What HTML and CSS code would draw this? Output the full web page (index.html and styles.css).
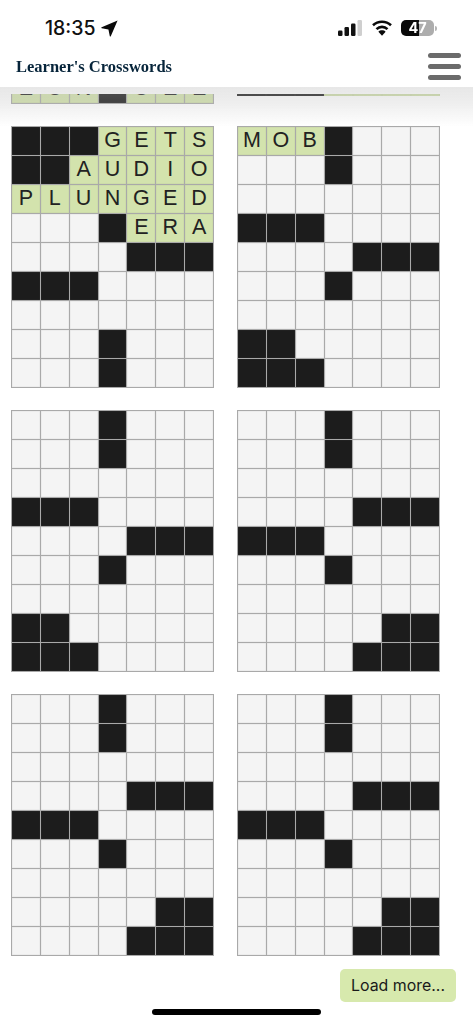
FILE: index.html
```html
<!DOCTYPE html>
<html lang="en">
<head>
<meta charset="utf-8">
<title>Learner's Crosswords</title>
<link rel="stylesheet" href="styles.css">
</head>
<body>
<header class="top">
  <div class="status">
    <div class="clock"><span>18:35</span>
      <svg class="arrow" viewBox="0 0 16 16"><path d="M15.6.5 9.2 15.300c-.2.5-.8.4-.9-.1L7 9 .7 7.700C.2 7.600.1 7 .6 6.800Z"/></svg>
    </div>
    <div class="sys">
      <svg class="signal" viewBox="0 0 24 16"><rect x="0" y="10.500" width="4.500" height="5.500" rx="1.200"/><rect x="6.500" y="7" width="4.500" height="9" rx="1.200"/><rect x="13" y="3.500" width="4.500" height="12.500" rx="1.200"/><rect class="off" x="19.500" y="0" width="4.500" height="16" rx="1.200"/></svg>
      <svg class="wifi" viewBox="0 0 22 16"><path class="arc" d="M2 5.300C7 .6 15 .6 20 5.300"/><path class="arc" d="M5.500 9.100c3.100-3 7.900-3 11 0"/><path d="M11 10.300c-1.400 0-2.700.5-3.600 1.400L11 15.700l3.600-4c-.9-.9-2.200-1.400-3.600-1.400Z"/></svg>
      <div class="battery"><span class="level">47</span></div>
      <span class="tip"></span>
    </div>
  </div>
  <nav class="bar">
    <span class="brand">Learner's Crosswords</span>
    <div class="burger"><span></span><span></span><span></span></div>
  </nav>
</header>

<main class="page">
  <div class="boards">
    <div class="board strip">
      <i class="g">E</i><i class="g">O</i><i class="g">N</i><i class="k"></i><i class="g">O</i><i class="g">E</i><i class="g">E</i>
    </div>
    <div class="board strip thin">
      <i class="k"></i><i class="k"></i><i class="k"></i><i class="g"></i><i class="g"></i><i class="g"></i><i class="g"></i>
    </div>

    <div class="board">
      <i class="k"></i><i class="k"></i><i class="k"></i><i class="g">G</i><i class="g">E</i><i class="g">T</i><i class="g">S</i>
      <i class="k"></i><i class="k"></i><i class="g">A</i><i class="g">U</i><i class="g">D</i><i class="g">I</i><i class="g">O</i>
      <i class="g">P</i><i class="g">L</i><i class="g">U</i><i class="g">N</i><i class="g">G</i><i class="g">E</i><i class="g">D</i>
      <i></i><i></i><i></i><i class="k"></i><i class="g">E</i><i class="g">R</i><i class="g">A</i>
      <i></i><i></i><i></i><i></i><i class="k"></i><i class="k"></i><i class="k"></i>
      <i class="k"></i><i class="k"></i><i class="k"></i><i></i><i></i><i></i><i></i>
      <i></i><i></i><i></i><i></i><i></i><i></i><i></i>
      <i></i><i></i><i></i><i class="k"></i><i></i><i></i><i></i>
      <i></i><i></i><i></i><i class="k"></i><i></i><i></i><i></i>
    </div>
    <div class="board">
      <i class="g">M</i><i class="g">O</i><i class="g">B</i><i class="k"></i><i></i><i></i><i></i>
      <i></i><i></i><i></i><i class="k"></i><i></i><i></i><i></i>
      <i></i><i></i><i></i><i></i><i></i><i></i><i></i>
      <i class="k"></i><i class="k"></i><i class="k"></i><i></i><i></i><i></i><i></i>
      <i></i><i></i><i></i><i></i><i class="k"></i><i class="k"></i><i class="k"></i>
      <i></i><i></i><i></i><i class="k"></i><i></i><i></i><i></i>
      <i></i><i></i><i></i><i></i><i></i><i></i><i></i>
      <i class="k"></i><i class="k"></i><i></i><i></i><i></i><i></i><i></i>
      <i class="k"></i><i class="k"></i><i class="k"></i><i></i><i></i><i></i><i></i>
    </div>

    <div class="board">
      <i></i><i></i><i></i><i class="k"></i><i></i><i></i><i></i>
      <i></i><i></i><i></i><i class="k"></i><i></i><i></i><i></i>
      <i></i><i></i><i></i><i></i><i></i><i></i><i></i>
      <i class="k"></i><i class="k"></i><i class="k"></i><i></i><i></i><i></i><i></i>
      <i></i><i></i><i></i><i></i><i class="k"></i><i class="k"></i><i class="k"></i>
      <i></i><i></i><i></i><i class="k"></i><i></i><i></i><i></i>
      <i></i><i></i><i></i><i></i><i></i><i></i><i></i>
      <i class="k"></i><i class="k"></i><i></i><i></i><i></i><i></i><i></i>
      <i class="k"></i><i class="k"></i><i class="k"></i><i></i><i></i><i></i><i></i>
    </div>
    <div class="board">
      <i></i><i></i><i></i><i class="k"></i><i></i><i></i><i></i>
      <i></i><i></i><i></i><i class="k"></i><i></i><i></i><i></i>
      <i></i><i></i><i></i><i></i><i></i><i></i><i></i>
      <i></i><i></i><i></i><i></i><i class="k"></i><i class="k"></i><i class="k"></i>
      <i class="k"></i><i class="k"></i><i class="k"></i><i></i><i></i><i></i><i></i>
      <i></i><i></i><i></i><i class="k"></i><i></i><i></i><i></i>
      <i></i><i></i><i></i><i></i><i></i><i></i><i></i>
      <i></i><i></i><i></i><i></i><i></i><i class="k"></i><i class="k"></i>
      <i></i><i></i><i></i><i></i><i class="k"></i><i class="k"></i><i class="k"></i>
    </div>

    <div class="board">
      <i></i><i></i><i></i><i class="k"></i><i></i><i></i><i></i>
      <i></i><i></i><i></i><i class="k"></i><i></i><i></i><i></i>
      <i></i><i></i><i></i><i></i><i></i><i></i><i></i>
      <i></i><i></i><i></i><i></i><i class="k"></i><i class="k"></i><i class="k"></i>
      <i class="k"></i><i class="k"></i><i class="k"></i><i></i><i></i><i></i><i></i>
      <i></i><i></i><i></i><i class="k"></i><i></i><i></i><i></i>
      <i></i><i></i><i></i><i></i><i></i><i></i><i></i>
      <i></i><i></i><i></i><i></i><i></i><i class="k"></i><i class="k"></i>
      <i></i><i></i><i></i><i></i><i class="k"></i><i class="k"></i><i class="k"></i>
    </div>
    <div class="board">
      <i></i><i></i><i></i><i class="k"></i><i></i><i></i><i></i>
      <i></i><i></i><i></i><i class="k"></i><i></i><i></i><i></i>
      <i></i><i></i><i></i><i></i><i></i><i></i><i></i>
      <i></i><i></i><i></i><i></i><i class="k"></i><i class="k"></i><i class="k"></i>
      <i class="k"></i><i class="k"></i><i class="k"></i><i></i><i></i><i></i><i></i>
      <i></i><i></i><i></i><i class="k"></i><i></i><i></i><i></i>
      <i></i><i></i><i></i><i></i><i></i><i></i><i></i>
      <i></i><i></i><i></i><i></i><i></i><i class="k"></i><i class="k"></i>
      <i></i><i></i><i></i><i></i><i class="k"></i><i class="k"></i><i class="k"></i>
    </div>
  </div>
  <div class="more"><button class="load">Load more...</button></div>
</main>
<div class="home"></div>
</body>
</html>
```

FILE: styles.css
```css
* { box-sizing: border-box; }
html, body { margin: 0; padding: 0; height: 100%; overflow: hidden; background: #fff; }
body { font-family: "Liberation Sans", sans-serif; }

.top {
  position: fixed;
  top: 0; left: 0; right: 0;
  height: 87px;
  background: #fff;
  z-index: 2;
}
.top::after {
  content: "";
  position: absolute;
  top: 100%; left: 0; right: 0;
  height: 40px;
  background: linear-gradient(to bottom, rgba(185,185,185,.34), rgba(185,185,185,.24) 40%, rgba(185,185,185,0));
}

.status {
  height: 47px;
  padding: 10px 36px 0 45px;
  display: flex;
  justify-content: space-between;
  align-items: center;
}
.clock { display: flex; align-items: center; gap: 5px; font: 500 19.5px/1 Inter, sans-serif; color: #111; }
.arrow { width: 17px; height: 17px; fill: #0a0a0a; margin-top: -1px; }
.sys { display: flex; align-items: center; margin-top: -1px; }
.signal { width: 24px; height: 16px; fill: #111; margin-right: 9px; }
.signal .off { fill: #cfcfcf; }
.wifi { width: 22px; height: 16px; fill: #0a0a0a; margin-right: 8px; }
.wifi .arc { fill: none; stroke: #0a0a0a; stroke-width: 2.6px; }
.battery {
  width: 33px; height: 16px;
  border-radius: 5px;
  background: linear-gradient(to right, #0a0a0a 55%, #adadad 55%);
  display: flex; align-items: center; justify-content: center;
}
.level { font: 700 14.5px/1 Inter, sans-serif; color: #fff; }
.tip { width: 2px; height: 5px; margin-left: 1px; border-radius: 0 2px 2px 0; background: #b5b5b5; }

.bar {
  height: 40px;
  padding: 0 12px 0 16px;
  display: flex;
  justify-content: space-between;
  align-items: center;
}
.brand { font: 700 16.5px/1 "Liberation Serif", serif; color: #06243a; }
.burger { width: 33px; display: flex; flex-direction: column; gap: 6.5px; margin-top: -1px; }
.burger span { height: 4.5px; border-radius: 3px; background: #6b6b6b; }

.page { padding: 94px 17px 0 11px; }
.boards {
  display: grid;
  grid-template-columns: 203px 203px;
  column-gap: 23px;
  row-gap: 22px;
  align-items: start;
}
.board {
  display: grid;
  grid-template-columns: repeat(7, 1fr);
  grid-auto-rows: 28px;
  gap: 1px;
  padding: 1px;
  background: #a9a9a9;
}
.board i {
  display: flex;
  align-items: center;
  justify-content: center;
  background: #f4f4f4;
  box-shadow: inset 0 0 1px rgba(120,120,120,.55);
  font: normal 21.5px/1 "Liberation Sans", sans-serif;
  color: #222;
}
.board i.g { background: #d3e3ad; }
.board i.k { background: #1c1c1c; }

.strip {
  height: 10px;
  padding-top: 0;
  overflow: hidden;
  align-content: end;
}
.thin {
  height: 1.5px;
  padding: 0;
  grid-auto-rows: 1.5px;
  background: none;
  gap: 0;
}

.more { display: flex; justify-content: flex-end; margin-top: 13px; }
.load {
  width: 116px; height: 33px;
  border: 0;
  border-radius: 5px;
  padding: 0;
  background: #d7e9ad;
  font: 400 15.9px/1 Inter, sans-serif;
  color: #1a1a1a;
}

.home {
  position: fixed;
  left: 152px; bottom: 9px;
  width: 169px; height: 6px;
  border-radius: 3px;
  background: #000;
}
```
